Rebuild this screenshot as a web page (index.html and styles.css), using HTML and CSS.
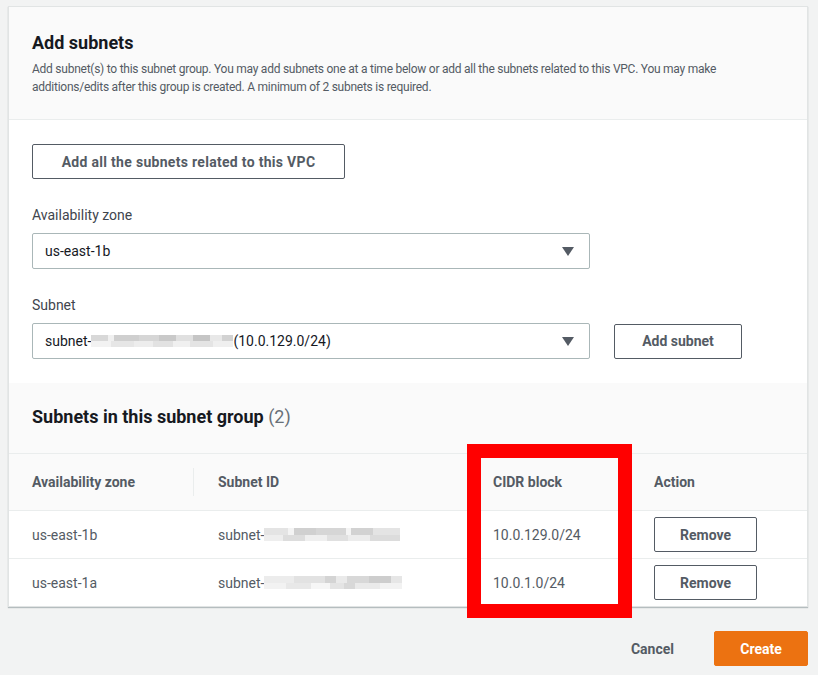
FILE: index.html
```html
<!DOCTYPE html>
<html>
<head>
<meta charset="utf-8">
<link rel="stylesheet" href="styles.css">
</head>
<body>
<div class="page">
  <div class="panel">
    <div class="panel-header">
      <h2 class="title">Add subnets</h2>
      <p class="desc">Add subnet(s) to this subnet group. You may add subnets one at a time below or add all the subnets related to this VPC. You may make additions/edits after this group is created. A minimum of 2 subnets is required.</p>
    </div>
    <div class="panel-body">
      <button class="btn btn-wide">Add all the subnets related to this VPC</button>
      <div class="field">
        <label class="label">Availability zone</label>
        <div class="select">
          <span class="value">us-east-1b</span>
          <span class="caret"></span>
        </div>
      </div>
      <div class="field">
        <label class="label">Subnet</label>
        <div class="field-row">
          <div class="select">
            <span class="value">subnet-<span class="blur blur-a"></span>(10.0.129.0/24)</span>
            <span class="caret"></span>
          </div>
          <button class="btn btn-add">Add subnet</button>
        </div>
      </div>
    </div>
    <div class="table-head">
      <h2 class="title">Subnets in this subnet group <span class="count">(2)</span></h2>
    </div>
    <div class="table">
      <div class="row row-head">
        <div class="cell sep">Availability zone</div>
        <div class="cell">Subnet ID</div>
        <div class="cell">CIDR block</div>
        <div class="cell">Action</div>
      </div>
      <div class="row">
        <div class="cell">us-east-1b</div>
        <div class="cell">subnet-<span class="blur blur-b"></span></div>
        <div class="cell">10.0.129.0/24</div>
        <div class="cell"><button class="btn btn-remove">Remove</button></div>
      </div>
      <div class="row">
        <div class="cell">us-east-1a</div>
        <div class="cell">subnet-<span class="blur blur-c"></span></div>
        <div class="cell">10.0.1.0/24</div>
        <div class="cell"><button class="btn btn-remove">Remove</button></div>
      </div>
    </div>
  </div>
  <div class="footer">
    <button class="btn-link">Cancel</button>
    <button class="btn btn-primary">Create</button>
  </div>
</div>
<div class="highlight"></div>
</body>
</html>
```
FILE: styles.css
```css
* { box-sizing: border-box; }
html, body { margin: 0; padding: 0; }
body {
  background: #f2f3f3;
  font-family: Roboto, "Liberation Sans", sans-serif;
  color: #16191f;
  position: relative;
  width: 818px;
  height: 675px;
  overflow: hidden;
}
.page {
  padding: 6px 10px 0 8px;
}
.panel {
  background: #fff;
  border: 1px solid #e1e4e4;
  box-shadow: 0 1px 1px rgba(0, 28, 36, 0.25);
}
.panel-header {
  background: #fafafa;
  border-bottom: 1px solid #eaeded;
  padding: 25px 23px 23px;
}
.title {
  margin: 0;
  font-size: 18px;
  line-height: 22px;
  font-weight: 700;
  color: #16191f;
}
.desc {
  margin: 6px 0 0;
  font-size: 12px;
  line-height: 18px;
  color: #545b64;
  letter-spacing: -0.25px;
}
.panel-body {
  padding: 24px 23px 24px;
  display: flex;
  flex-direction: column;
  align-items: flex-start;
}
.btn {
  font-family: inherit;
  background: #fff;
  border: 1px solid #545b64;
  border-radius: 2px;
  color: #545b64;
  font-weight: 700;
  font-size: 14px;
  height: 35px;
  padding: 0 20px;
  cursor: pointer;
}
.btn-wide { width: 313px; letter-spacing: 0.3px; }
.field {
  margin-top: 25px;
  width: 100%;
}
.label {
  display: block;
  font-size: 14px;
  line-height: 22px;
  color: #3f454d;
  margin-bottom: 7px;
}
.select {
  width: 558px;
  height: 36px;
  border: 1px solid #aab7b8;
  border-radius: 2px;
  display: flex;
  align-items: center;
  justify-content: space-between;
  padding: 0 15px 0 12px;
  font-size: 14px;
  color: #16191f;
}
.value { display: flex; align-items: center; }
.caret {
  width: 0;
  height: 0;
  border-left: 6px solid transparent;
  border-right: 6px solid transparent;
  border-top: 9px solid #545b64;
}
.field-row {
  display: flex;
  align-items: center;
  gap: 24px;
}
.btn-add { width: 128px; }
.blur {
  display: inline-block;
  height: 12px;
}
.blur-a {
  width: 142px;
  background:
    linear-gradient(90deg, #d8d8d8 0 12%, #f0f0f0 12% 16%, #cfcfcf 16% 34%, #d6d6d6 34% 48%, #c9c9c9 48% 60%, #e0e0e0 60% 72%, #c5c5c5 72% 84%, #e8e8e8 84% 92%, #d2d2d2 92% 100%) top / 100% 6px no-repeat,
    linear-gradient(90deg, #f2f2f2 0 14%, #e6e6e6 14% 30%, #ededed 30% 44%, #e2e2e2 44% 58%, #f0f0f0 58% 70%, #e4e4e4 70% 86%, #efefef 86% 100%) bottom / 100% 6px no-repeat;
}
.blur-b {
  width: 136px;
  height: 13px;
  background:
    linear-gradient(90deg, #e4e4e4 0 18%, #f4f4f4 18% 22%, #d0d0d0 22% 38%, #d6d6d6 38% 60%, #f4f4f4 60% 64%, #d2d2d2 64% 80%, #e4e4e4 80% 100%) top / 100% 7px no-repeat,
    linear-gradient(90deg, #eeeeee 0 14%, #dddddd 14% 30%, #efefef 30% 46%, #e0e0e0 46% 62%, #ececec 62% 78%, #dcdcdc 78% 100%) bottom / 100% 6px no-repeat;
}
.blur-c {
  width: 138px;
  height: 13px;
  background:
    linear-gradient(90deg, #ececec 0 22%, #e2e2e2 22% 44%, #d4d4d4 44% 52%, #eaeaea 52% 60%, #d8d8d8 60% 76%, #cdcdcd 76% 92%, #e6e6e6 92% 100%) top / 100% 7px no-repeat,
    linear-gradient(90deg, #f2f2f2 0 16%, #e8e8e8 16% 34%, #f6f6f6 34% 48%, #e4e4e4 48% 58%, #d8d8d8 58% 66%, #eaeaea 66% 84%, #f2f2f2 84% 100%) bottom / 100% 6px no-repeat;
}
.table-head {
  background: #fafafa;
  padding: 23px 23px 25px;
  border-bottom: 1px solid #eaeded;
}
.count { color: #687078; font-weight: 400; }
.row {
  display: grid;
  grid-template-columns: 185px 275px 162px 1fr;
  height: 48px;
  align-items: center;
  border-top: 1px solid #eaeded;
  font-size: 14px;
  color: #545b64;
}
.row:first-child { border-top: none; }
.row-head {
  background: #fafafa;
  height: 56px;
  font-weight: 700;
}
.cell {
  padding-left: 24px;
  display: flex;
  align-items: center;
  height: 100%;
}
.row .cell:first-child { padding-left: 23px; }
.sep {
  position: relative;
}
.sep::after {
  content: "";
  position: absolute;
  right: 0;
  top: 14px;
  bottom: 14px;
  border-right: 1px solid #eaeded;
}
.cell:nth-child(4) { padding-left: 23px; }
.btn-remove {
  width: 103px;
  height: 35px;
  padding: 0;
}
.footer {
  display: flex;
  justify-content: flex-end;
  align-items: center;
  gap: 20px;
  margin-top: 24px;
}
.btn-link {
  font-family: inherit;
  background: none;
  border: none;
  color: #545b64;
  font-weight: 700;
  font-size: 14px;
  padding: 0 20px;
  height: 35px;
}
.btn-primary {
  background: #ec7211;
  border-color: #ec7211;
  color: #fff;
  width: 94px;
  padding: 0;
}
.highlight {
  position: absolute;
  left: 467px;
  top: 444px;
  width: 165px;
  height: 174px;
  border: 14px solid #ff0000;
}
```
